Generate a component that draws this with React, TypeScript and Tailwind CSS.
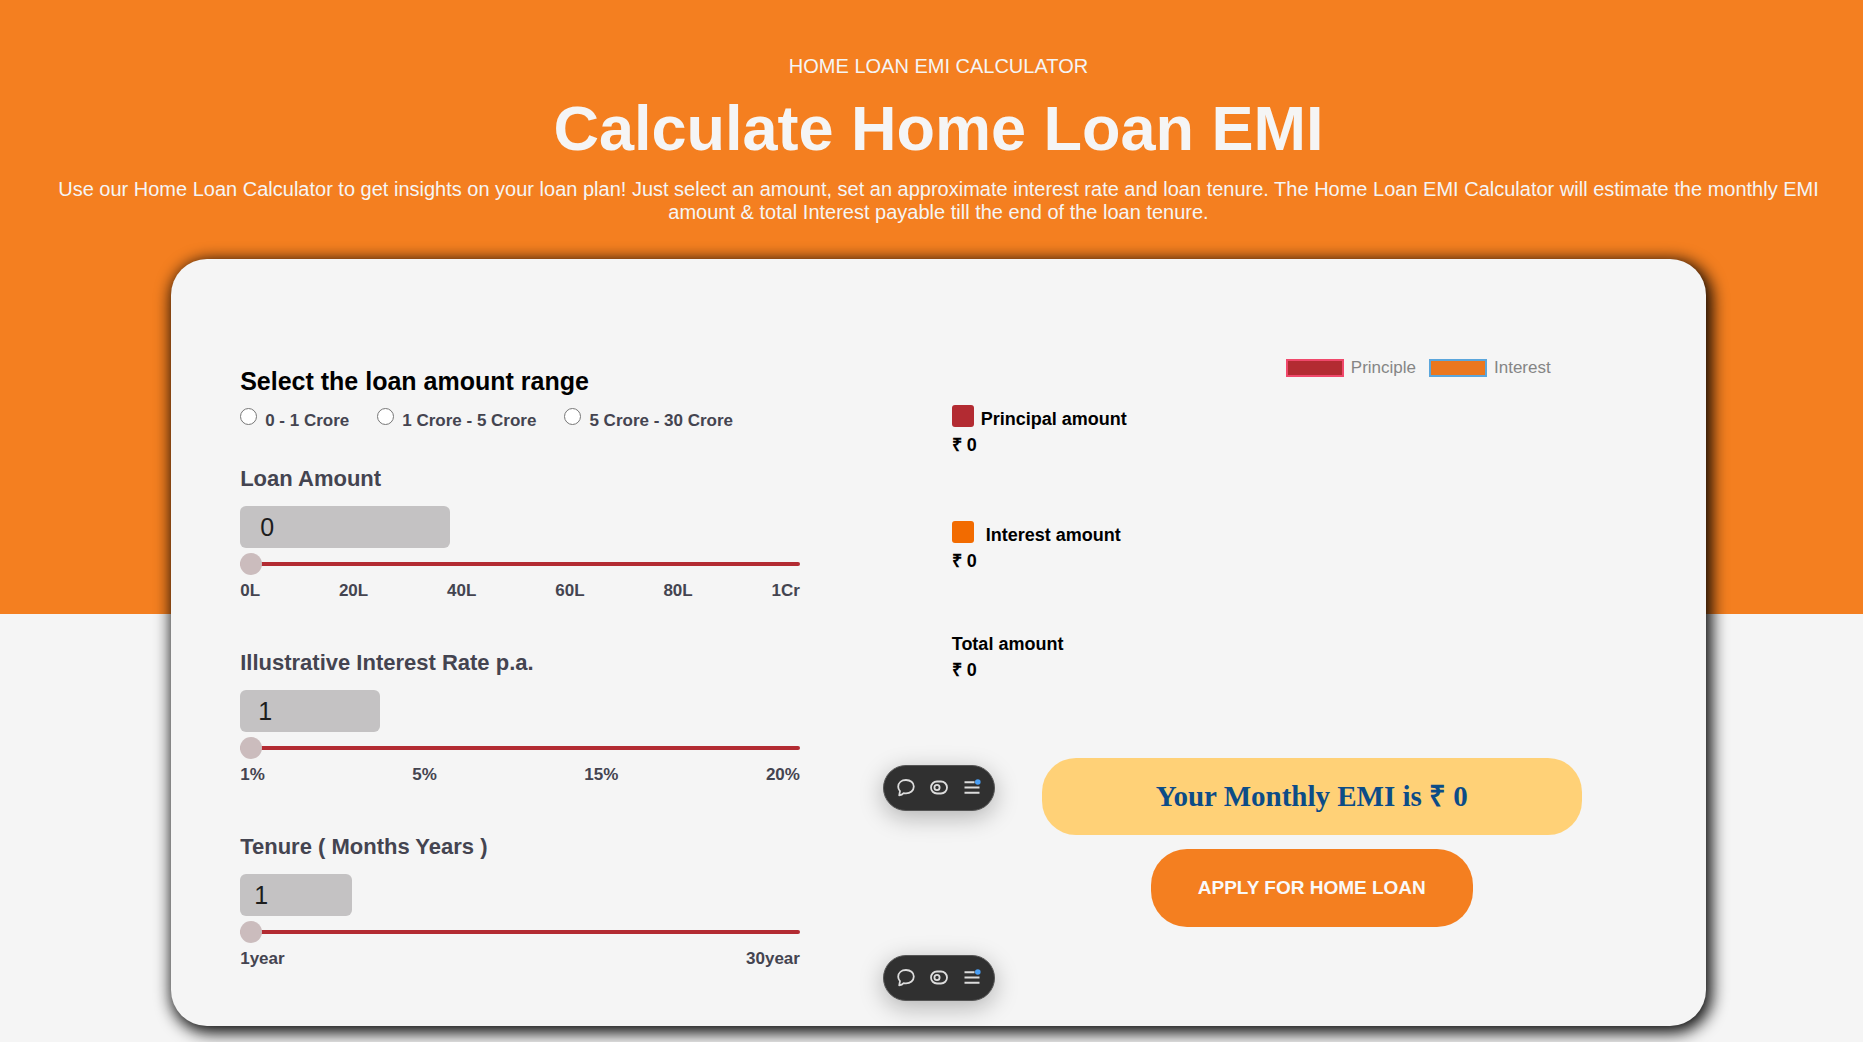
import { useState } from "react";

const RANGES = ["0 - 1 Crore", "1 Crore - 5 Crore", "5 Crore - 30 Crore"];

type FieldProps = {
  id: string;
  label: string;
  initial: number;
  min: number;
  max: number;
  marks: string[];
  inputClass: string;
};

function SliderField({ id, label, initial, min, max, marks, inputClass }: FieldProps) {
  const [value, setValue] = useState(String(initial));
  return (
    <div className="flex flex-col">
      <label htmlFor={id} className="text-[22px] leading-7 font-bold text-[#444450]">
        {label}
      </label>
      <input
        id={id}
        type="text"
        value={value}
        onChange={(e) => setValue(e.target.value)}
        className={`mt-[13px] h-[42px] rounded-md bg-[#c4c2c3] text-[25px] text-[#1d1d1d] outline-none ${inputClass}`}
      />
      <input
        type="range"
        aria-label={label}
        min={min}
        max={max}
        value={Number(value) || min}
        onChange={(e) => setValue(e.target.value)}
        className="mt-[14px] h-1 w-full appearance-none rounded-full bg-[#b32b32] outline-none [&::-webkit-slider-thumb]:size-[22px] [&::-webkit-slider-thumb]:appearance-none [&::-webkit-slider-thumb]:rounded-full [&::-webkit-slider-thumb]:bg-[#cbbcbd]"
      />
      <div className="mt-[13px] flex justify-between text-[17px] leading-6 font-bold text-[#444450]">
        {marks.map((m) => (
          <span key={m}>{m}</span>
        ))}
      </div>
    </div>
  );
}

function Toolbar({ className }: { className: string }) {
  return (
    <div
      role="toolbar"
      aria-label="Page tools"
      className={`absolute left-1/2 flex h-[46px] w-[112px] -translate-x-1/2 items-center justify-between rounded-full border border-[#555] bg-[#303030] px-[13px] shadow-[0_6px_24px_rgba(0,0,0,0.28)] ${className}`}
    >
      <button type="button" aria-label="Comment">
        <svg width="18" height="20" viewBox="0 0 18 20" fill="none" stroke="#dcdcdc" strokeWidth="1.8" strokeLinejoin="round">
          <path d="M2.200 17.300 3 13.200A7 6.600 0 0 1 1.200 8.800C1.200 4.600 4.600 2 9 2s7.800 2.600 7.800 6.600-3.500 6.800-7.800 6.800c-.8 0-1.600-.1-2.300-.3C5.700 16.500 4.200 17.300 2.200 17.300Z" />
        </svg>
      </button>
      <button type="button" aria-label="Toggle preview">
        <svg width="18" height="20" viewBox="0 0 18 20" fill="none" stroke="#dcdcdc" strokeWidth="1.8">
          <rect x="1" y="3.500" width="16" height="12" rx="6" />
          <circle cx="7" cy="9.500" r="2.600" />
        </svg>
      </button>
      <button type="button" aria-label="Menu">
        <svg width="18" height="20" viewBox="0 0 18 20" fill="none" stroke="#dcdcdc" strokeWidth="2">
          <path d="M1.500 4.200h10M1.500 9.500h15M1.500 14.800h15" />
          <circle cx="14.800" cy="4" r="2.800" fill="#4a9ff5" stroke="none" />
        </svg>
      </button>
    </div>
  );
}

function Amount({ name, swatch, gap }: { name: string; swatch?: string; gap?: string }) {
  return (
    <div className="text-[18px] leading-[26px] font-bold text-black">
      <dt className={swatch ? `flex h-[33px] items-end ${gap}` : ""}>
        {swatch && <span className={`mb-[5px] size-[22px] rounded-[3px] ${swatch}`} />}
        {name}
      </dt>
      <dd>₹ 0</dd>
    </div>
  );
}

function LegendItem({ name, box }: { name: string; box: string }) {
  return (
    <li className="flex items-center gap-[7px]">
      <span className={`h-[18px] w-[58px] border-2 ${box}`} />
      {name}
    </li>
  );
}

export default function App() {
  const [range, setRange] = useState("");
  return (
    <div className="min-h-screen overflow-hidden bg-[#f5f5f5] pb-4 font-['Liberation_Sans',Arial,sans-serif]">
      <header className="bg-[#f47f20] pt-[54px] pr-9 pb-[390px] pl-[50px] text-center text-[#f5f5f5]">
        <p className="text-[20px] leading-6">HOME LOAN EMI CALCULATOR</p>
        <h1 className="mt-[14px] text-[63px] leading-[72px] font-bold">Calculate Home Loan EMI</h1>
        <p className="mt-[14px] text-[20px] leading-[23px]">
          Use our Home Loan Calculator to get insights on your loan plan! Just select an amount, set an
          approximate interest rate and loan tenure. The Home Loan EMI Calculator will estimate the monthly
          EMI amount &amp; total Interest payable till the end of the loan tenure.
        </p>
      </header>

      <main className="-mt-[355px] pl-[14px]">
        <div className="relative mx-auto flex w-[83%] justify-between rounded-[36px] bg-[#f5f5f5] pt-[100px] pr-[34px] pb-[55px] pl-[69px] shadow-[3px_4px_16px_3px_rgba(0,0,0,0.95)]">
          <form className="mt-[6px] w-[39.1%]">
            <fieldset>
              <legend className="text-[25px] leading-[32px] font-bold text-black">
                Select the loan amount range
              </legend>
              <div className="mt-[11px] flex gap-7">
                {RANGES.map((r) => (
                  <label key={r} className="flex items-start gap-2 text-[17px] leading-[26px] font-bold text-[#444450]">
                    <input
                      type="radio"
                      name="range"
                      checked={range === r}
                      onChange={() => setRange(r)}
                      className="size-[17px]"
                    />
                    <span className="whitespace-nowrap">{r}</span>
                  </label>
                ))}
              </div>
            </fieldset>
            <div className="mt-[31px] flex flex-col gap-[46px]">
              <SliderField
                id="amount"
                label="Loan Amount"
                initial={0}
                min={0}
                max={100}
                marks={["0L", "20L", "40L", "60L", "80L", "1Cr"]}
                inputClass="w-[210px] pl-5"
              />
              <SliderField
                id="rate"
                label="Illustrative Interest Rate p.a."
                initial={1}
                min={1}
                max={20}
                marks={["1%", "5%", "15%", "20%"]}
                inputClass="w-[140px] pl-[18px]"
              />
              <SliderField
                id="tenure"
                label="Tenure ( Months Years )"
                initial={1}
                min={1}
                max={30}
                marks={["1year", "30year"]}
                inputClass="w-[112px] pl-[14px]"
              />
            </div>
          </form>

          <section className="flex w-[50.3%] flex-col">
            <div className="flex">
              <dl className="mt-[40px] flex w-[213px] flex-col gap-[57px]">
                <Amount name="Principal amount" swatch="bg-[#b32b32]" gap="gap-[7px]" />
                <Amount name="Interest amount" swatch="bg-[#f26b00]" gap="gap-3" />
                <Amount name="Total amount" />
              </dl>
              <ul className="flex flex-1 justify-center gap-[13px] self-start text-[17px] leading-[18px] text-[#858585]">
                <LegendItem name="Principle" box="border-[#f0486b] bg-[#b32b32]" />
                <LegendItem name="Interest" box="border-[#5ba6dc] bg-[#ea771f]" />
              </ul>
            </div>
            <div className="mt-[75px] flex flex-col items-center gap-[14px]">
              <output className="flex h-[77px] w-3/4 items-center justify-center rounded-[34px] bg-[#ffd177] font-['Liberation_Serif','Times_New_Roman',serif] text-[29px] font-bold text-[#0c4c87]">
                Your Monthly EMI is ₹ 0
              </output>
              <button
                type="button"
                className="h-[78px] rounded-[36px] bg-[#f47f20] px-[47px] text-[19px] font-bold text-[#f9f9f9]"
              >
                APPLY FOR HOME LOAN
              </button>
            </div>
          </section>

          <Toolbar className="bottom-[215px]" />
          <Toolbar className="bottom-[25px]" />
        </div>
      </main>
    </div>
  );
}
